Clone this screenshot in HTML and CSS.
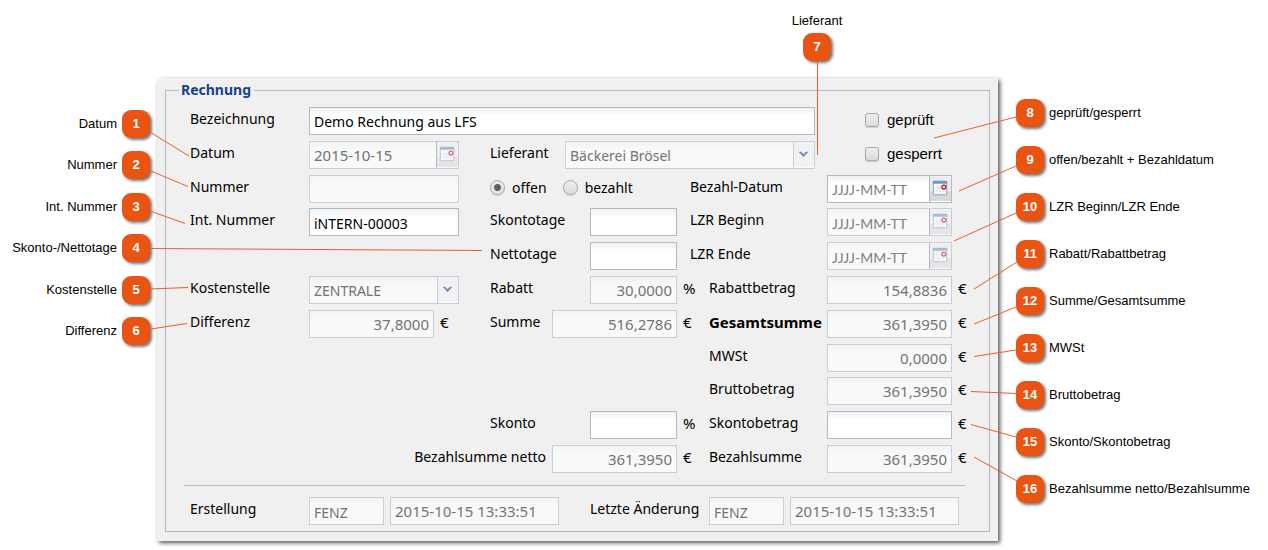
FILE: index.html
```html
<!DOCTYPE html>
<html lang="de">
<head>
<meta charset="utf-8">
<title>Rechnung</title>
<link rel="stylesheet" href="styles.css">
</head>
<body>
<svg class="symbols" aria-hidden="true">
  <symbol id="calendar" viewBox="0 0 22 25">
    <path d="M0 0H22V25H0Z" fill="#ececec"/>
    <path d="M0 15H22V25H0Z" fill="#d8d8d8"/>
    <rect x="3.500" y="4.500" width="14" height="14" rx="1" fill="#fff" stroke="#7f9cc6"/>
    <path d="M3 4H18V7H3Z" fill="#7394c4"/>
    <path d="M4 11.500H17M4 14.500H17M7.500 8V18M10.500 8V18M13.500 8V18" stroke="#d9dde6" fill="none"/>
    <circle cx="14.500" cy="10.500" r="2" fill="#fff" stroke="#b3262e" stroke-width="1.500"/>
  </symbol>
  <symbol id="arrow" viewBox="0 0 22 25">
    <path d="M0 0H22V25H0Z" fill="#f0f1f3"/>
    <path d="M5 9H8L10.500 11.500L13 9H16L10.500 15Z" fill="#7f90b8"/>
  </symbol>
</svg>

<div class="page">
  <ol class="callouts callouts-left">
    <li>Datum<b>1</b></li>
    <li>Nummer<b>2</b></li>
    <li>Int. Nummer<b>3</b></li>
    <li>Skonto-/Nettotage<b>4</b></li>
    <li>Kostenstelle<b>5</b></li>
    <li>Differenz<b>6</b></li>
  </ol>

  <div class="callout-top">Lieferant<b>7</b></div>

  <form class="panel">
    <fieldset>
      <legend>Rechnung</legend>
      <div class="rows">
        <div class="row">
          <label class="name" for="bez">Bezeichnung</label>
          <input class="grow" id="bez" type="text" value="Demo Rechnung aus LFS">
          <label class="check"><input type="checkbox">geprüft</label>
        </div>
        <div class="row">
          <label class="name" for="datum">Datum</label>
          <div class="combo off medium"><input class="date" id="datum" type="text" value="2015-10-15" disabled><button type="button" aria-label="Datum wählen" disabled><svg><use href="#calendar"/></svg></button></div>
          <label class="supplier" for="lief">Lieferant</label>
          <div class="combo off grow"><select id="lief" disabled><option>Bäckerei Brösel</option></select><svg><use href="#arrow"/></svg></div>
          <label class="check"><input type="checkbox">gesperrt</label>
        </div>
        <div class="row">
          <div class="first"><label class="name" for="nr">Nummer</label><input class="grow" id="nr" type="text" disabled></div>
          <div class="second"><label class="radio open"><input type="radio" name="status" checked>offen</label><label class="radio"><input type="radio" name="status">bezahlt</label></div>
          <div class="third"><label for="bd">Bezahl-Datum</label><div class="combo amount"><input id="bd" type="text" placeholder="JJJJ-MM-TT"><button type="button" aria-label="Bezahldatum wählen"><svg><use href="#calendar"/></svg></button></div></div>
        </div>
        <div class="row">
          <div class="first"><label class="name" for="int">Int. Nummer</label><input class="grow" id="int" type="text" value="iNTERN-00003"></div>
          <div class="second"><label for="st">Skontotage</label><input class="short spaced" id="st" type="text"></div>
          <div class="third"><label for="lb">LZR Beginn</label><div class="combo off amount"><input id="lb" type="text" placeholder="JJJJ-MM-TT" disabled><button type="button" aria-label="LZR Beginn wählen" disabled><svg><use href="#calendar"/></svg></button></div></div>
        </div>
        <div class="row">
          <div class="first"></div>
          <div class="second"><label for="nt">Nettotage</label><input class="short spaced" id="nt" type="text"></div>
          <div class="third"><label for="le">LZR Ende</label><div class="combo off amount"><input id="le" type="text" placeholder="JJJJ-MM-TT" disabled><button type="button" aria-label="LZR Ende wählen" disabled><svg><use href="#calendar"/></svg></button></div></div>
        </div>
        <div class="row">
          <div class="first"><label class="name" for="ks">Kostenstelle</label><div class="combo off grow"><select id="ks" disabled><option>ZENTRALE</option></select><svg><use href="#arrow"/></svg></div></div>
          <div class="second"><label for="rab">Rabatt</label><input class="short number" id="rab" type="text" value="30,0000" disabled><span class="unit">%</span></div>
          <div class="third sum"><label for="rb">Rabattbetrag</label><input class="amount number" id="rb" type="text" value="154,8836" disabled><span class="unit">€</span></div>
        </div>
        <div class="row">
          <div class="first"><label class="name" for="dif">Differenz</label><input class="amount number" id="dif" type="text" value="37,8000" disabled><span class="unit">€</span></div>
          <div class="second"><label for="su">Summe</label><input class="amount number" id="su" type="text" value="516,2786" disabled><span class="unit">€</span></div>
          <div class="third sum"><label class="strong" for="gs">Gesamtsumme</label><input class="amount number" id="gs" type="text" value="361,3950" disabled><span class="unit">€</span></div>
        </div>
        <div class="row end">
          <div class="third sum"><label for="mw">MWSt</label><input class="amount number" id="mw" type="text" value="0,0000" disabled><span class="unit">€</span></div>
        </div>
        <div class="row end">
          <div class="third sum"><label for="br">Bruttobetrag</label><input class="amount number" id="br" type="text" value="361,3950" disabled><span class="unit">€</span></div>
        </div>
        <div class="row">
          <div class="first"></div>
          <div class="second"><label for="sk">Skonto</label><input class="short number" id="sk" type="text"><span class="unit">%</span></div>
          <div class="third sum"><label for="sb">Skontobetrag</label><input class="amount number" id="sb" type="text"><span class="unit">€</span></div>
        </div>
        <div class="row">
          <div class="second net"><label for="bn">Bezahlsumme netto</label><input class="amount number" id="bn" type="text" value="361,3950" disabled><span class="unit">€</span></div>
          <div class="third sum"><label for="bs">Bezahlsumme</label><input class="amount number" id="bs" type="text" value="361,3950" disabled><span class="unit">€</span></div>
        </div>
      </div>
      <hr>
      <div class="row log">
        <div><label class="name" for="eu">Erstellung</label><input class="user" id="eu" type="text" value="FENZ" disabled><input class="stamp date" type="text" aria-label="Zeitpunkt der Erstellung" value="2015-10-15 13:33:51" disabled></div>
        <div><label class="name" for="au">Letzte Änderung</label><input class="user" id="au" type="text" value="FENZ" disabled><input class="stamp date" type="text" aria-label="Zeitpunkt der Änderung" value="2015-10-15 13:33:51" disabled></div>
      </div>
    </fieldset>
  </form>

  <ol class="callouts callouts-right">
    <li><b>8</b>geprüft/gesperrt</li>
    <li><b>9</b>offen/bezahlt + Bezahldatum</li>
    <li><b>10</b>LZR Beginn/LZR Ende</li>
    <li><b>11</b>Rabatt/Rabattbetrag</li>
    <li><b>12</b>Summe/Gesamtsumme</li>
    <li><b>13</b>MWSt</li>
    <li><b>14</b>Bruttobetrag</li>
    <li><b>15</b>Skonto/Skontobetrag</li>
    <li><b>16</b>Bezahlsumme netto/Bezahlsumme</li>
  </ol>

  <svg class="leaders leaders-left" viewBox="0 0 500 540" aria-hidden="true">
    <path d="M150 132L189 156M151 171L188 186.500M150 211L185 223.500M150 248.500L482 250.500M150 289L188 287.500M151 329L187 323.500"/>
  </svg>
  <svg class="leaders leaders-right" viewBox="768 0 500 540" aria-hidden="true">
    <path d="M817.500 61V155M1016 117L934 138M1016 166L959 191M1016 213L954 241M1017 262L974 289M1016 307L974 324M1016 350L974 356.500M1016 393.500L971 391.500M1016 437L971 424.500M1017 481L974 457"/>
  </svg>
</div>
</body>
</html>
```
FILE: styles.css
```css
* { box-sizing: border-box; }

body {
  margin: 0;
  background: #fff;
  color: #000;
  font: 14px/20px "Noto Sans", sans-serif;
}

.symbols { display: none; }

.page {
  position: relative;
  display: grid;
  grid-template-columns: 157px minmax(841px, 1fr) 270px;
  grid-template-rows: 78px auto;
  padding-bottom: 9px;
}

/* numbered callouts */
.callouts,
.callout-top { font: 13px/16px "Liberation Sans", Arial, sans-serif; }

.callouts {
  grid-row: 1 / 3;
  align-self: start;
  display: flex;
  flex-direction: column;
  justify-content: space-between;
  margin: 0;
  list-style: none;
}

.callouts li {
  display: flex;
  align-items: center;
  gap: 5px;
  white-space: nowrap;
}

.callouts-left {
  grid-column: 1;
  min-height: 345px;
  padding: 110px 7px 0 0;
}

.callouts-left li { justify-content: flex-end; }

.callouts-right {
  grid-column: 3;
  gap: 19px;
  padding: 99px 0 0 18px;
}

.callout-top {
  grid-column: 2;
  grid-row: 1;
  display: flex;
  flex-direction: column;
  align-items: center;
  justify-self: end;
  gap: 4px;
  width: 60px;
  margin-right: 151px;
  padding-top: 13px;
}

.callouts b,
.callout-top b {
  display: grid;
  place-items: center;
  width: 28px;
  height: 28px;
  border-radius: 9px;
  background: #e95412;
  box-shadow: 2px 2px 3px #777;
  color: #fff;
}

.leaders {
  position: absolute;
  top: 0;
  width: 500px;
  height: 540px;
  fill: none;
  stroke: #ec6027;
  pointer-events: none;
}

.leaders-left { left: 0; }
.leaders-right { right: 0; }

/* form */
.panel {
  grid-column: 2;
  grid-row: 2;
  padding: 2px 8px 9px;
  border-radius: 5px 0 0 0;
  background: #f0f0f0;
  box-shadow: 2px 2px 4px #555;
}

fieldset {
  margin: 0;
  padding: 4px 20px 6px 24px;
  border: 1px solid #b5b8c8;
}

legend {
  margin-left: -11px;
  padding: 0 3px 0 2px;
  color: #15428b;
  font-weight: bold;
}

.rows {
  display: grid;
  grid-template-rows: repeat(11, 1fr);
  min-height: 372px;
}

.row,
.row > div { display: flex; align-items: center; }

label,
.unit { padding-bottom: 4px; white-space: nowrap; }

.name { width: 119px; }
.grow { flex: 1; min-width: 0; }
.medium { width: 150px; }
.short { width: 87px; }
.amount { width: 125px; }
.strong { font-weight: bold; font-size: 15px; }
.spaced { margin-right: 13px; }
.unit { width: 11px; margin-left: 6px; font-size: 15px; }

.first { width: 269px; margin-right: 31px; }
.second { flex: 1; }
.second > :nth-child(2) { margin-left: auto; }
.second .unit { width: 13px; margin-right: 13px; }
.third { width: 279px; }
.third label { flex: 1; }
.third .combo { margin-right: 17px; }
.sum { width: 260px; }
.sum label { flex: 0 0 118px; }
.end { justify-content: flex-end; }

.row > .net { justify-content: flex-end; }
.second.net > input { margin-left: 6px; }

.supplier { width: 75px; margin-left: 31px; }

input[type="text"],
.combo {
  height: 28px;
  border: 1px solid #b5b8c8;
  background: linear-gradient(#eef1f2, #fff 8px);
}

input[type="text"],
select {
  padding: 2px 4px 0;
  border-radius: 0;
  color: #000;
  font: inherit;
}

input.number { text-align: right; }

input[type="text"].number,
input[type="text"].date {
  padding-top: 0;
  font-size: 15px;
}

input::placeholder {
  color: #808080;
  font-family: Lato, sans-serif;
  opacity: 1;
}

input[type="text"]:disabled,
.off { border-color: #cacdd8; background: linear-gradient(#f1f3f4, #f9f9f9 8px); }

input[type="text"]:disabled,
select:disabled { color: #737373; opacity: 1; }

.combo { display: flex; position: relative; }

.combo input[type="text"],
.combo select {
  flex: 1;
  min-width: 0;
  width: 100%;
  height: 26px;
  border: 0;
  background: none;
  appearance: none;
}

.combo button {
  width: 22px;
  padding: 0;
  border: 0;
  border-left: 1px solid #b5b8c8;
  background: none;
}

.combo svg { display: block; width: 21px; height: 26px; }

.combo select + svg {
  border-left: 1px solid #cacdd8;
  pointer-events: none;
}

.off svg { opacity: 0.6; }
.off select + svg { opacity: 1; }

.check {
  display: flex;
  align-items: center;
  gap: 8px;
  width: 104px;
  margin-left: 50px;
  padding: 0 0 2px;
  font-family: "Liberation Sans", Arial, sans-serif;
  font-size: 15px;
}

.check input,
.radio input {
  flex: none;
  margin: 0;
  appearance: none;
  border: 1px solid #aaa;
  background: linear-gradient(#eee, #dcdcdc);
  box-shadow: 0 1px 1px #ccc;
}

.check input { width: 14px; height: 14px; border-radius: 3px; }
.radio input { width: 15px; height: 15px; border-radius: 50%; }

.radio input:checked {
  background: radial-gradient(circle, #606060 3px, #e6e6e6 4px);
}

.radio {
  display: flex;
  align-items: center;
  gap: 7px;
  padding: 0 0 2px;
}

.second > .radio { margin: 0; }
.second > .open { margin-right: 16px; }

hr {
  margin: 9px 4px 11px -6px;
  border: 0;
  border-top: 1px solid #b5b8c8;
}

.row.log { justify-content: space-between; padding-right: 10px; }
.user { width: 75px; margin-right: 6px; }
.stamp { width: 169px; }
```
